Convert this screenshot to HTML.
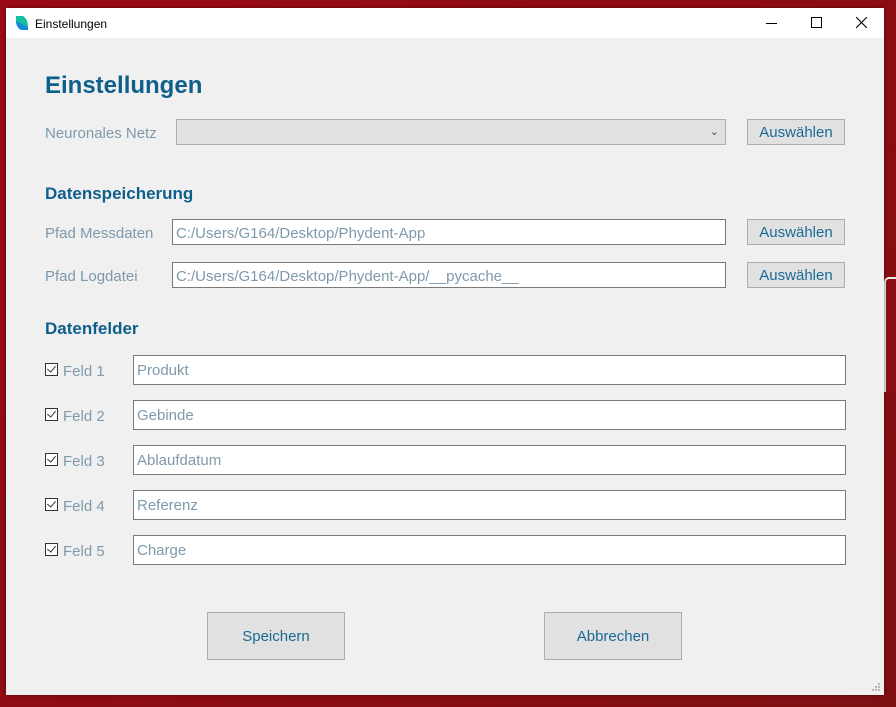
<!DOCTYPE html>
<html><head><style>
body{margin:0;width:896px;height:707px;background:linear-gradient(135deg,#9a0a14,#8a0d12 60%,#7e1014);position:relative;overflow:hidden;font-family:"Liberation Sans",sans-serif}
.win{position:absolute;left:6px;top:8px;width:878px;height:687px;background:#f0f0f0;box-shadow:0 0 3px rgba(0,0,0,.5)}
.tb{height:30px;background:#fff;position:relative}
.tb .t{position:absolute;left:29px;top:9px;font-size:12px;color:#000}
.a{position:absolute;font-size:15px;color:#7f9aab}
.h{position:absolute;color:#0f5f8c;font-weight:bold}
.inp{position:absolute;background:#fff;border:1px solid #7a7a7a;box-sizing:border-box;font-size:15px;color:#7f9aab;padding-left:3px;padding-top:2px;line-height:24px}
.btn{position:absolute;background:#e1e1e1;border:1px solid #adadad;box-sizing:border-box;color:#1a6a96;font-size:15px;text-align:center;padding-top:2px}
.cb{position:absolute;width:11px;height:11px;border:1px solid #333;background:#fff}
.cb:after{content:"";position:absolute;left:3px;top:0px;width:4px;height:7px;border:solid #333;border-width:0 1.3px 1.3px 0;transform:rotate(40deg)}
</style></head><body>
<div style="position:absolute;left:884px;top:277px;width:14px;height:115px;background:#8a0d12;border-left:2px solid #e8e8e8;border-top:2px solid #e8e8e8;border-radius:5px 0 0 0;box-sizing:border-box"></div>
<div class="win">
<div class="tb">
<svg style="position:absolute;left:9px;top:7px" width="14" height="16" viewBox="0 0 14 16"><path d="M1 1 L8 1 Q13 4 13 12 L13 15 L6 15 Q1 12 1 6Z" fill="#14c0a0"/><path d="M1 6 Q1 12 6 15 L13 15 L13 12Z" fill="#1a88d8"/></svg>
<span class="t">Einstellungen</span>
<div style="position:absolute;left:760px;top:15px;width:11px;height:1px;background:#000"></div>
<div style="position:absolute;left:805px;top:9px;width:9px;height:9px;border:1px solid #000"></div>
<svg style="position:absolute;left:850px;top:9px" width="11" height="11"><path d="M0 0L11 11M11 0L0 11" stroke="#000" stroke-width="1.1"/></svg>
</div>
<div class="h" style="left:39px;top:64px;font-size:24px">Einstellungen</div>
<div class="a" style="left:39px;top:117px">Neuronales Netz</div>
<div class="inp" style="left:170px;top:111px;width:550px;height:26px;background:#e1e1e1;border-color:#adadad"><span style="position:absolute;right:6px;top:0;font-size:11px;color:#555">&#8964;</span></div>
<div class="btn" style="left:741px;top:111px;width:98px;height:26px;line-height:22px">Auswählen</div>
<div class="h" style="left:39px;top:176px;font-size:17px">Datenspeicherung</div>
<div class="a" style="left:39px;top:217px">Pfad Messdaten</div>
<div class="inp" style="left:166px;top:211px;width:554px;height:26px">C:/Users/G164/Desktop/Phydent-App</div>
<div class="btn" style="left:741px;top:211px;width:98px;height:26px;line-height:22px">Auswählen</div>
<div class="a" style="left:39px;top:260px">Pfad Logdatei</div>
<div class="inp" style="left:166px;top:254px;width:554px;height:26px">C:/Users/G164/Desktop/Phydent-App/__pycache__</div>
<div class="btn" style="left:741px;top:254px;width:98px;height:26px;line-height:22px">Auswählen</div>
<div class="h" style="left:39px;top:311px;font-size:17px">Datenfelder</div>

<div class="cb" style="left:39px;top:355px"></div><div class="a" style="left:57px;top:355px">Feld 1</div>
<div class="inp" style="left:127px;top:347px;width:713px;height:30px;line-height:26px">Produkt</div>
<div class="cb" style="left:39px;top:400px"></div><div class="a" style="left:57px;top:400px">Feld 2</div>
<div class="inp" style="left:127px;top:392px;width:713px;height:30px;line-height:26px">Gebinde</div>
<div class="cb" style="left:39px;top:445px"></div><div class="a" style="left:57px;top:445px">Feld 3</div>
<div class="inp" style="left:127px;top:437px;width:713px;height:30px;line-height:26px">Ablaufdatum</div>
<div class="cb" style="left:39px;top:490px"></div><div class="a" style="left:57px;top:490px">Feld 4</div>
<div class="inp" style="left:127px;top:482px;width:713px;height:30px;line-height:26px">Referenz</div>
<div class="cb" style="left:39px;top:535px"></div><div class="a" style="left:57px;top:535px">Feld 5</div>
<div class="inp" style="left:127px;top:527px;width:713px;height:30px;line-height:26px">Charge</div>

<div class="btn" style="left:201px;top:604px;width:138px;height:48px;line-height:44px">Speichern</div>
<div class="btn" style="left:538px;top:604px;width:138px;height:48px;line-height:44px">Abbrechen</div>
<svg style="position:absolute;left:866px;top:675px" width="9" height="9"><g fill="#b8b8b8"><rect x="6" y="0" width="2" height="2"/><rect x="3" y="3" width="2" height="2"/><rect x="6" y="3" width="2" height="2"/><rect x="0" y="6" width="2" height="2"/><rect x="3" y="6" width="2" height="2"/><rect x="6" y="6" width="2" height="2"/></g></svg>
</div>
</body></html>
